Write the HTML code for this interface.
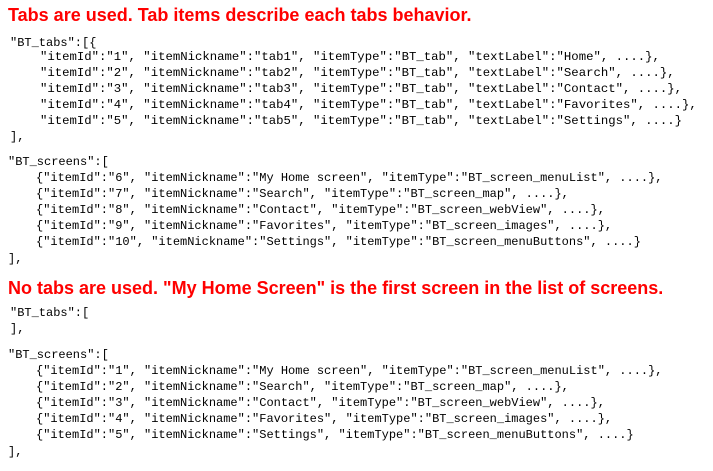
<!DOCTYPE html>
<html><head><meta charset="utf-8"><style>
body{margin:0;width:713px;height:471px;background:#fff;position:relative;overflow:hidden}
.h{position:absolute;left:8px;font:bold 18px "Liberation Sans",Arial,sans-serif;color:#f00;white-space:pre;line-height:20px}
.c{position:absolute;font-family:"Liberation Mono",monospace;font-size:12px;color:#000;white-space:pre;line-height:16px}
.t{font-size:12.3px}
</style></head><body>
<div class="h" style="top:5px">Tabs are used. Tab items describe each tabs behavior.</div>
<div class="c" style="left:10px;top:35px">"BT_tabs":[{</div>
<div class="c t" style="left:40px;top:49px">"itemId":"1", "itemNickname":"tab1", "itemType":"BT_tab", "textLabel":"Home", ....},
"itemId":"2", "itemNickname":"tab2", "itemType":"BT_tab", "textLabel":"Search", ....},
"itemId":"3", "itemNickname":"tab3", "itemType":"BT_tab", "textLabel":"Contact", ....},
"itemId":"4", "itemNickname":"tab4", "itemType":"BT_tab", "textLabel":"Favorites", ....},
"itemId":"5", "itemNickname":"tab5", "itemType":"BT_tab", "textLabel":"Settings", ....}</div>
<div class="c" style="left:10px;top:129px">],</div>
<div class="c" style="left:8px;top:154px">"BT_screens":[</div>
<div class="c" style="left:36px;top:170px">{"itemId":"6", "itemNickname":"My Home screen", "itemType":"BT_screen_menuList", ....},
{"itemId":"7", "itemNickname":"Search", "itemType":"BT_screen_map", ....},
{"itemId":"8", "itemNickname":"Contact", "itemType":"BT_screen_webView", ....},
{"itemId":"9", "itemNickname":"Favorites", "itemType":"BT_screen_images", ....},
{"itemId":"10", "itemNickname":"Settings", "itemType":"BT_screen_menuButtons", ....}</div>
<div class="c" style="left:8px;top:251px">],</div>
<div class="h" style="top:278px">No tabs are used. "My Home Screen" is the first screen in the list of screens.</div>
<div class="c" style="left:10px;top:305px">"BT_tabs":[
],</div>
<div class="c" style="left:8px;top:347px">"BT_screens":[</div>
<div class="c" style="left:36px;top:363px">{"itemId":"1", "itemNickname":"My Home screen", "itemType":"BT_screen_menuList", ....},
{"itemId":"2", "itemNickname":"Search", "itemType":"BT_screen_map", ....},
{"itemId":"3", "itemNickname":"Contact", "itemType":"BT_screen_webView", ....},
{"itemId":"4", "itemNickname":"Favorites", "itemType":"BT_screen_images", ....},
{"itemId":"5", "itemNickname":"Settings", "itemType":"BT_screen_menuButtons", ....}</div>
<div class="c" style="left:8px;top:444px">],</div>
</body></html>
